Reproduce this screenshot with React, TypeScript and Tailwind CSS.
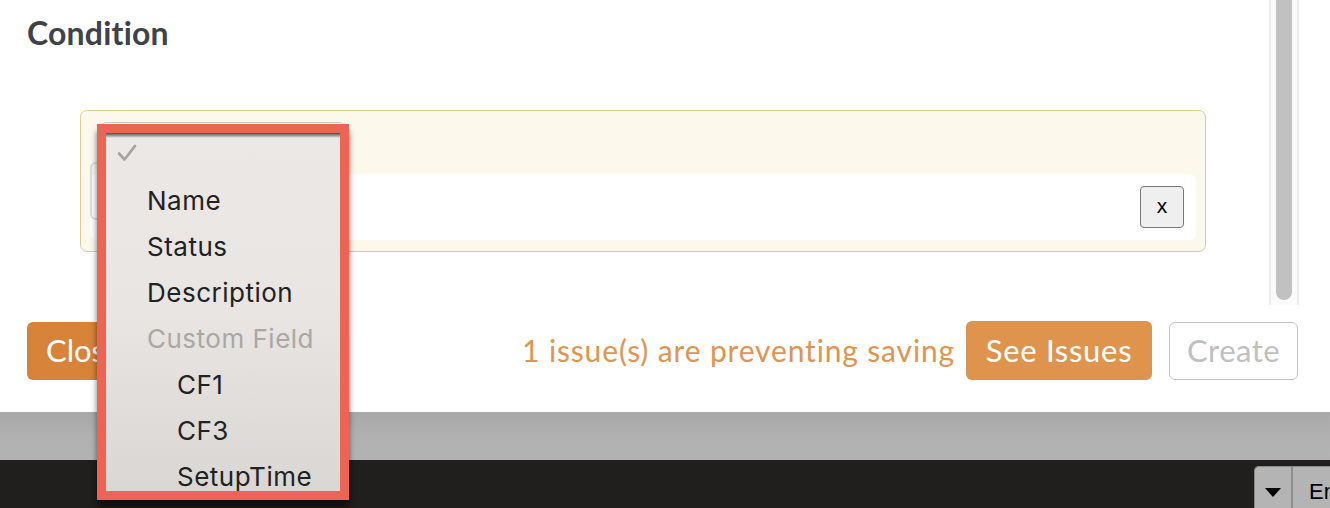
import React from 'react'

const menuItems = [
  { label: 'Name', indent: false, muted: false },
  { label: 'Status', indent: false, muted: false },
  { label: 'Description', indent: false, muted: false },
  { label: 'Custom Field', indent: false, muted: true },
  { label: 'CF1', indent: true, muted: false },
  { label: 'CF3', indent: true, muted: false },
  { label: 'SetupTime', indent: true, muted: false }
]

const FieldMenu = () => {
  return (
    <div className="absolute left-[97px] top-[124px] h-[376px] w-[252px] border-[9px] border-[#ec6453] shadow-[0_7px_6px_rgba(0,0,0,0.55)]">
      <div className="relative h-full w-full overflow-hidden bg-gradient-to-b from-[#ebe8e5] via-[#e8e5e2] to-[#d9d7d4] font-['Inter',sans-serif] text-[26px] text-[#222]">
        <div className="absolute inset-x-0 top-0 h-[5px] bg-gradient-to-b from-[#4a4a4a] to-transparent" />
        <div className="flex h-[44px] items-center pb-[4px] pl-[11px]">
          <svg width="20" height="20" viewBox="0 0 20 20">
            <path
              d="M2 10.5 L7.5 16.5 L18 3"
              fill="none"
              stroke="#a6a4a2"
              strokeWidth="2.8"
              strokeLinecap="round"
              strokeLinejoin="round"
            />
          </svg>
        </div>
        {menuItems.map((item) => (
          <div
            key={item.label}
            className={`flex h-[46px] items-center tracking-[0.5px] ${item.indent ? 'pl-[71px]' : 'pl-[41px]'} ${item.muted ? 'text-[#a9a8a6]' : ''}`}
          >
            {item.label}
          </div>
        ))}
      </div>
    </div>
  )
}

const App = () => {
  return (
    <div className="relative flex h-[508px] w-[1330px] flex-col overflow-hidden bg-white font-['Lato',sans-serif]">
      <div className="flex h-[412px] flex-col bg-white">
        <div className="flex h-[305px]">
          <div className="flex-1 pl-[27px] pt-[17px]">
            <h2 className="text-[32px] font-bold leading-[32px] tracking-[0.2px] text-[#3d4349]">Condition</h2>
            <div className="ml-[53px] mt-[61px] h-[142px] w-[1126px] rounded-[7px] border-[1.5px] border-[#dccb9a] bg-[#fcf8eb] px-[9px] pt-[11px]">
              <div className="ml-[10px] h-[40px] w-[246px] rounded-[6px] border border-[#cfcfcf] bg-[#f4f4f4]" />
              <div className="mt-[12px] flex h-[66px] items-center rounded-[7px] bg-white pr-[12px]">
                <div className="-mt-[12px] h-[58px] w-[60px] self-start rounded-[6px] border-2 border-[#dcdcdc]" />
                <div className="flex-1" />
                <button className="flex h-[42px] w-[44px] items-center justify-center rounded-[4px] border-[1.5px] border-[#777] bg-[#efefef] pb-[3px] font-['Liberation_Sans',sans-serif] text-[21px] text-black">
                  x
                </button>
              </div>
            </div>
          </div>
          <div className="ml-[6px] mr-[31px] flex w-[30px] justify-center border-x-[2px] border-[#ececec] bg-[#fafafa]">
            <div className="h-[300px] w-[16px] rounded-b-full bg-[#c1c1c1]" />
          </div>
        </div>
        <div className="mt-[16px] flex items-center pl-[27px] pr-[32px]">
          <button className="h-[58px] rounded-[6px] bg-[#d8833a] px-[19px] text-[31px] text-white">Close</button>
          <div className="flex-1" />
          <span className="mr-[11px] text-[30px] tracking-[0.85px] text-[#e0944f]">1 issue(s) are preventing saving</span>
          <button className="h-[59px] w-[186px] rounded-[6px] bg-[#df944d] text-[31px] tracking-[0.7px] text-white">See Issues</button>
          <button className="ml-[17px] h-[58px] w-[129px] rounded-[6px] border-[1.5px] border-[#c4c4c4] bg-white text-[31px] tracking-[0.5px] text-[#c0c0c0]">
            Create
          </button>
        </div>
      </div>
      <div className="h-[48px] bg-gradient-to-b from-[#a8a8a8] via-[#b1b1b1] to-[#b3b3b3]" />
      <div className="flex flex-1 justify-end bg-[#201f1d] pt-[6px]">
        <div className="flex h-full w-[76px] rounded-tl-[5px] border-l border-t border-[#8a8a8a] bg-[#b4b4b4]">
          <div className="flex w-[38px] shrink-0 items-center justify-center border-r-2 border-[#8e8e8e] pt-[10px]">
            <svg width="16" height="9" viewBox="0 0 16 9">
              <path d="M0 0 H16 L8 9 Z" fill="#000" />
            </svg>
          </div>
          <div className="flex items-center pl-[16px] pt-[8px] font-['Liberation_Sans',sans-serif] text-[22px] text-black">En</div>
        </div>
      </div>
      <FieldMenu />
    </div>
  )
}

export default App
